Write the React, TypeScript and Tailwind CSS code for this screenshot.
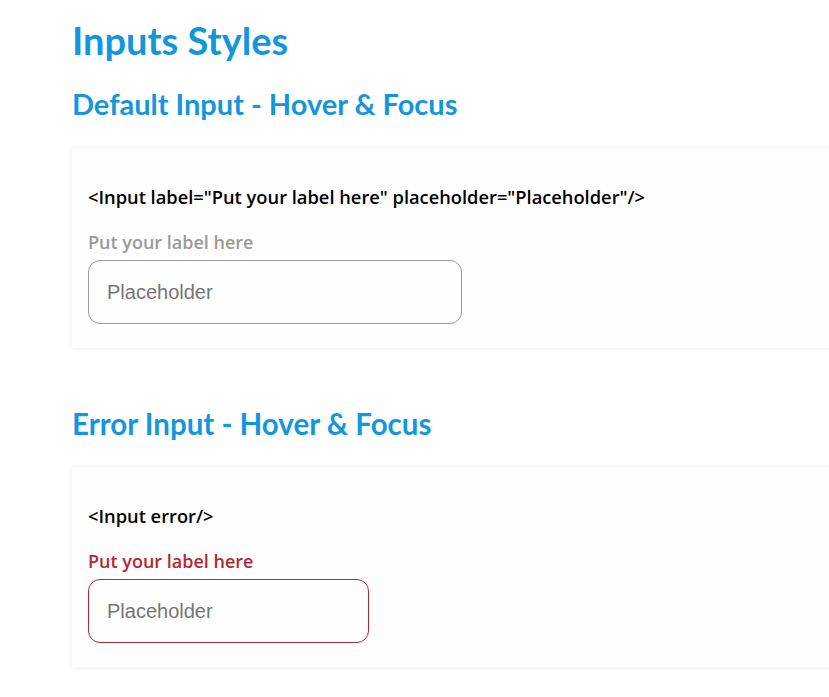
import React from 'react';

const InputField = ({ label, error, widthClass }: { label: string; error?: boolean; widthClass: string }) => {
  return (
    <div className="flex flex-col">
      <label
        className={`text-[18px] font-semibold leading-[24px] ${error ? 'text-[#b8262f]' : 'text-[#9a9a9a]'}`}
      >
        {label}
      </label>
      <input
        placeholder="Placeholder"
        className={`mt-[6px] h-[64px] ${widthClass} rounded-[12px] border px-[18px] text-[20px] font-['Liberation_Sans',Arial,sans-serif] placeholder:text-[#757575] outline-none ${
          error ? 'border-[#b8262f]' : 'border-[#9a9a9a]'
        }`}
      />
    </div>
  );
};

const App = () => {
  return (
    <div className="min-h-screen bg-white pl-[72px] pt-[18px] font-['Open_Sans',sans-serif] overflow-hidden">
      <h1 className="font-['Lato',sans-serif] font-bold text-[38px] leading-[44px] text-[#1496dc]">
        Inputs Styles
      </h1>

      <h2 className="mt-[24px] font-['Lato',sans-serif] font-bold text-[29px] leading-[36px] text-[#1496dc]">
        Default Input - Hover &amp; Focus
      </h2>
      <div className="mt-[26px] w-[800px] bg-[#fefefe] pl-[16px] pt-[36px] pb-[24px] shadow-[0_1px_5px_rgba(0,0,0,0.08)]">
        <p className="text-[18.3px] font-semibold leading-[26px] text-black">
          &lt;Input label="Put your label here" placeholder="Placeholder"/&gt;
        </p>
        <div className="mt-[20px]">
          <InputField label="Put your label here" widthClass="w-[374px]" />
        </div>
      </div>

      <h2 className="mt-[58px] font-['Lato',sans-serif] font-bold text-[29.5px] leading-[36px] text-[#1496dc]">
        Error Input - Hover &amp; Focus
      </h2>
      <div className="mt-[25px] w-[800px] bg-[#fefefe] pl-[16px] pt-[36px] pb-[24px] shadow-[0_1px_5px_rgba(0,0,0,0.08)]">
        <p className="text-[18.3px] font-semibold leading-[26px] text-black">&lt;Input error/&gt;</p>
        <div className="mt-[20px]">
          <InputField label="Put your label here" error widthClass="w-[281px]" />
        </div>
      </div>
    </div>
  );
};

export default App;
